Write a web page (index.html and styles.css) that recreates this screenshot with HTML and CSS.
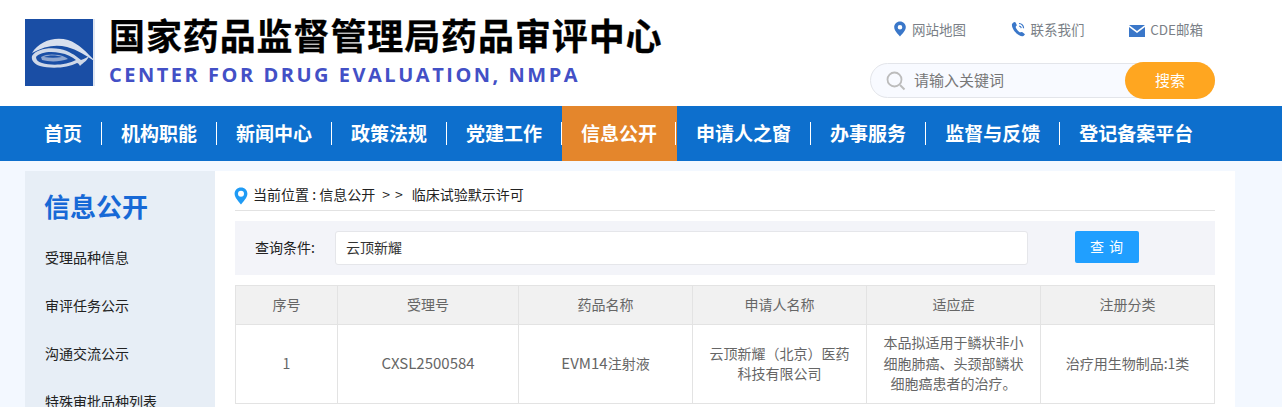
FILE: index.html
```html
<!DOCTYPE html>
<html lang="zh-CN">
<head>
<meta charset="utf-8">
<title>临床试验默示许可</title>
<link rel="stylesheet" href="styles.css">
</head>
<body>
<header class="top">
  <div class="brand">
    <svg class="logo" viewBox="0 0 70 68" aria-hidden="true">
      <rect width="68" height="67" fill="#1a4ea5"/>
      <rect x="68" width="2" height="67" fill="#dfe6f2"/>
      <path d="M7 34C14 22 30 17 43 21C55 25 63 35 72 44C62 37 53 31 42 28C31 25 19 27 7 34Z" fill="#d9e0ee"/>
      <path d="M7 37C11 30 24 28 35 30C44 32 50 36 56 41C60 40 62 38 64 37C63 41 58 44 55 47C54 45 53 44 52 44C43 49 26 50 15 47C9 45 6 41 7 37Z" fill="#cfd8e8"/>
      <path d="M11 38C15 33 26 32 35 34C42 35 47 38 51 41C42 46 27 47 17 44C13 43 11 41 11 38Z" fill="#1a4ea5"/>
      <path d="M16 38C20 35 28 35 34 36C38 37 41 38 43 40C35 43 24 43 17 41Z" fill="#8fa6cf"/>
      <path d="M19 38C24 36 31 36 37 38C31 39 25 39 19 38Z" fill="#1a4ea5"/>
    </svg>
    <div class="brand-text">
      <h1 class="title">国家药品监督管理局药品审评中心</h1>
      <p class="subtitle">CENTER FOR DRUG EVALUATION, NMPA</p>
    </div>
  </div>
  <div class="tools">
    <ul class="links">
      <li class="link">
        <svg class="link-icon" viewBox="0 0 16 16" aria-hidden="true"><path fill="#3a77c9" fill-rule="evenodd" d="M8 0.5C4.7 0.5 2.2 3 2.2 6.1C2.2 9.8 6.1 13.4 8 15.5C9.9 13.4 13.8 9.8 13.8 6.1C13.8 3 11.3 0.5 8 0.5ZM8 3.9A2.3 2.3 0 1 1 8 8.5A2.3 2.3 0 1 1 8 3.9Z"/></svg>
        <span>网站地图</span>
      </li>
      <li class="link">
        <svg class="link-icon" viewBox="0 0 16 16" aria-hidden="true"><path fill="#3a77c9" d="M1 3C2 1.700 3.300 0.800 4 1.100C4.600 1.500 5.900 3.700 5.800 4.300C5.700 4.900 4.700 5.300 4.700 6C4.700 7.400 7.300 10.600 8.700 11.300C9.400 11.600 10 10.800 10.700 10.900C11.400 11 13.600 12.600 13.900 13.200C14.100 13.800 12.800 15 11.700 15.300C8 16 0 8 1 3Z"/><path fill="none" stroke="#3a77c9" stroke-width="1.200" d="M8 2.500C10.500 2.700 12.400 4.800 12.600 7.200M8 5C9.200 5.100 10.100 6 10.300 7.200"/></svg>
        <span>联系我们</span>
      </li>
      <li class="link link-mail">
        <svg class="link-icon mail" viewBox="0 0 16 12" aria-hidden="true"><path fill="#3a77c9" d="M0 0H16L8 6ZM0 2L8 8L16 2V12H0Z"/></svg>
        <span>CDE邮箱</span>
      </li>
    </ul>
    <div class="search">
      <svg class="search-icon" viewBox="0 0 20 20" aria-hidden="true"><circle cx="8.500" cy="8.500" r="7" fill="none" stroke="#bcbcbc" stroke-width="1.800"/><path d="M14 14L18.500 18.500" stroke="#bcbcbc" stroke-width="2"/></svg>
      <span class="search-text">请输入关键词</span>
      <button class="search-btn" type="button">搜索</button>
    </div>
  </div>
</header>
<nav class="nav">
  <a class="nav-item">首页</a>
  <a class="nav-item">机构职能</a>
  <a class="nav-item">新闻中心</a>
  <a class="nav-item">政策法规</a>
  <a class="nav-item">党建工作</a>
  <a class="nav-item active">信息公开</a>
  <a class="nav-item">申请人之窗</a>
  <a class="nav-item">办事服务</a>
  <a class="nav-item">监督与反馈</a>
  <a class="nav-item last">登记备案平台</a>
</nav>
<div class="page">
  <aside class="side">
    <h2 class="side-title">信息公开</h2>
    <ul class="side-list">
      <li>受理品种信息</li>
      <li>审评任务公示</li>
      <li>沟通交流公示</li>
      <li>特殊审批品种列表</li>
    </ul>
  </aside>
  <main class="main">
    <div class="crumb">
      <svg class="crumb-icon" viewBox="0 0 14 18" aria-hidden="true"><path fill="#1f9bf5" fill-rule="evenodd" d="M7 0.500C3.300 0.500 0.600 3.200 0.600 6.700C0.600 10.500 4.900 14.900 7 17.500C9.100 14.900 13.400 10.500 13.400 6.700C13.400 3.200 10.700 0.500 7 0.500ZM7 3.700A3 3 0 1 1 7 9.700A3 3 0 1 1 7 3.700Z"/></svg>
      <span>当前位置 : 信息公开</span>
      <span class="crumb-sep">&gt; &gt;</span>
      <span>临床试验默示许可</span>
    </div>
    <div class="query">
      <label class="query-label">查询条件:</label>
      <div class="query-input">云顶新耀</div>
      <button class="query-btn" type="button">查 询</button>
    </div>
    <table class="grid">
      <colgroup>
        <col class="c1"><col class="c2"><col class="c3"><col class="c3"><col class="c3"><col class="c4">
      </colgroup>
      <thead>
        <tr><th>序号</th><th>受理号</th><th>药品名称</th><th>申请人名称</th><th>适应症</th><th>注册分类</th></tr>
      </thead>
      <tbody>
        <tr>
          <td>1</td>
          <td><span class="latin">CXSL2500584</span></td>
          <td><span class="latin">EVM14</span>注射液</td>
          <td>云顶新耀（北京）医药科技有限公司</td>
          <td>本品拟适用于鳞状非小细胞肺癌、头颈部鳞状细胞癌患者的治疗。</td>
          <td>治疗用生物制品:1类</td>
        </tr>
      </tbody>
    </table>
  </main>
</div>
</body>
</html>
```
FILE: styles.css
```css
* { box-sizing: border-box; }
html, body { margin: 0; padding: 0; }
body {
  width: 1282px;
  height: 407px;
  overflow: hidden;
  background: #f3f8ff;
  font-family: "Noto Sans CJK SC", "Open Sans", sans-serif;
  color: #222;
}
.top {
  height: 106px;
  background: #fff;
  display: flex;
  justify-content: space-between;
  padding: 0 67px 0 25px;
}
.brand { display: flex; align-items: flex-start; padding-top: 19px; }
.logo { width: 70px; height: 68px; display: block; }
.brand-text { margin-left: 14px; }
.title {
  margin: -8px 0 0;
  font-size: 36px;
  line-height: 46px;
  font-weight: 700;
  letter-spacing: 0.9px;
  color: #000;
  white-space: nowrap;
  -webkit-text-stroke: 0.3px #000;
}
.subtitle {
  margin: 5px 0 0;
  font-family: "Open Sans", sans-serif;
  font-size: 20px;
  line-height: 26px;
  font-weight: 700;
  letter-spacing: 2.52px;
  color: #4350c6;
  white-space: nowrap;
}
.tools { width: 345px; display: flex; flex-direction: column; }
.links {
  list-style: none;
  margin: 0;
  padding: 19px 12px 0 22px;
  height: 62px;
  display: flex;
  justify-content: space-between;
}
.link {
  display: flex;
  align-items: center;
  height: 20px;
  gap: 4px;
  font-size: 13.500px;
  color: #7a7f87;
}
.link-mail { gap: 5px; }
.link-icon { width: 16px; height: 16px; display: block; }
.link-icon.mail { height: 12px; margin-top: 3px; }
.search {
  position: relative;
  height: 35px;
  margin-top: 1px;
  display: flex;
  align-items: center;
  background: #f8faff;
  border: 1px solid #e3e5ea;
  border-radius: 18px;
  padding-left: 15px;
}
.search-icon { width: 20px; height: 20px; display: block; }
.search-text { margin: 0 0 2px 8px; font-size: 15px; color: #777; }
.search-btn {
  position: absolute;
  right: -1px;
  top: -2px;
  width: 90px;
  height: 37px;
  padding: 0 0 2px;
  border: 0;
  border-radius: 19px;
  background: #ffa620;
  color: #fff;
  font-family: inherit;
  font-size: 15px;
}
.nav {
  height: 55px;
  background: #0d6fcd;
  display: flex;
  align-items: center;
  padding-left: 25px;
}
.nav-item {
  position: relative;
  height: 55px;
  padding: 0 19px 2px;
  margin-right: 1px;
  display: flex;
  align-items: center;
  font-size: 19px;
  font-weight: 700;
  color: #fff;
  white-space: nowrap;
}
.nav-item::after {
  content: "";
  position: absolute;
  right: -1px;
  top: 16px;
  width: 1px;
  height: 23px;
  background: #fff;
}
.nav-item.last::after { display: none; }
.nav-item.active { background: #e4862c; box-shadow: 1px 0 0 #e4862c; }
.nav-item.active::after { right: 0; }
.page {
  display: flex;
  margin: 10px 47px 0 25px;
  height: 236px;
  overflow: hidden;
}
.side { width: 190px; background: #e7eef6; padding: 0 19px 0 20px; }
.side-title {
  margin: 17px 0 0 -1px;
  font-size: 26px;
  line-height: 36px;
  font-weight: 700;
  color: #1769d6;
}
.side-list { list-style: none; margin: 9px 0 0; padding: 0; }
.side-list li {
  height: 48px;
  line-height: 48px;
  font-size: 14px;
  color: #222;
  white-space: nowrap;
}
.main { width: 1020px; background: #fff; padding: 0 20px; }
.crumb {
  height: 40px;
  padding-top: 6px;
  display: flex;
  align-items: center;
  gap: 5px;
  font-size: 14px;
  color: #222;
  border-bottom: 1px solid #e2e2e2;
}
.crumb-icon { width: 14px; height: 18px; display: block; margin: 4px 0 0 -1px; }
.crumb-sep { margin: 0 4px 0 2px; word-spacing: 2px; }
.query {
  height: 54px;
  margin-top: 10px;
  background: #f3f4f9;
  display: flex;
  align-items: center;
  padding-left: 20px;
}
.query-label { width: 80px; margin-bottom: 2px; font-size: 14px; color: #222; }
.query-input {
  width: 693px;
  height: 34px;
  line-height: 30px;
  padding-left: 10px;
  background: #fff;
  border: 1px solid #e5e6ea;
  border-radius: 3px;
  font-size: 14px;
  color: #333;
}
.query-btn {
  width: 64px;
  height: 32px;
  margin: 0 0 2px 47px;
  padding: 0 0 2px;
  border: 0;
  border-radius: 2px;
  background: #209fff;
  color: #fff;
  font-family: inherit;
  font-size: 14px;
  letter-spacing: 1px;
}
.grid {
  width: 979px;
  margin-top: 10px;
  table-layout: fixed;
  border-collapse: collapse;
  font-size: 14px;
  color: #666;
}
.c1 { width: 102px; }
.c2 { width: 181px; }
.c3 { width: 174px; }
.c4 { width: 174px; }
.grid th, .grid td {
  border: 1px solid #e3e3e3;
  text-align: center;
  font-weight: 400;
}
.grid th { height: 39px; padding: 0 0 2px; background: #f1f1f1; }
.grid td { height: 79px; padding: 0 16px 2px; line-height: 20.500px; }
.latin { font-size: 15px; }
```
